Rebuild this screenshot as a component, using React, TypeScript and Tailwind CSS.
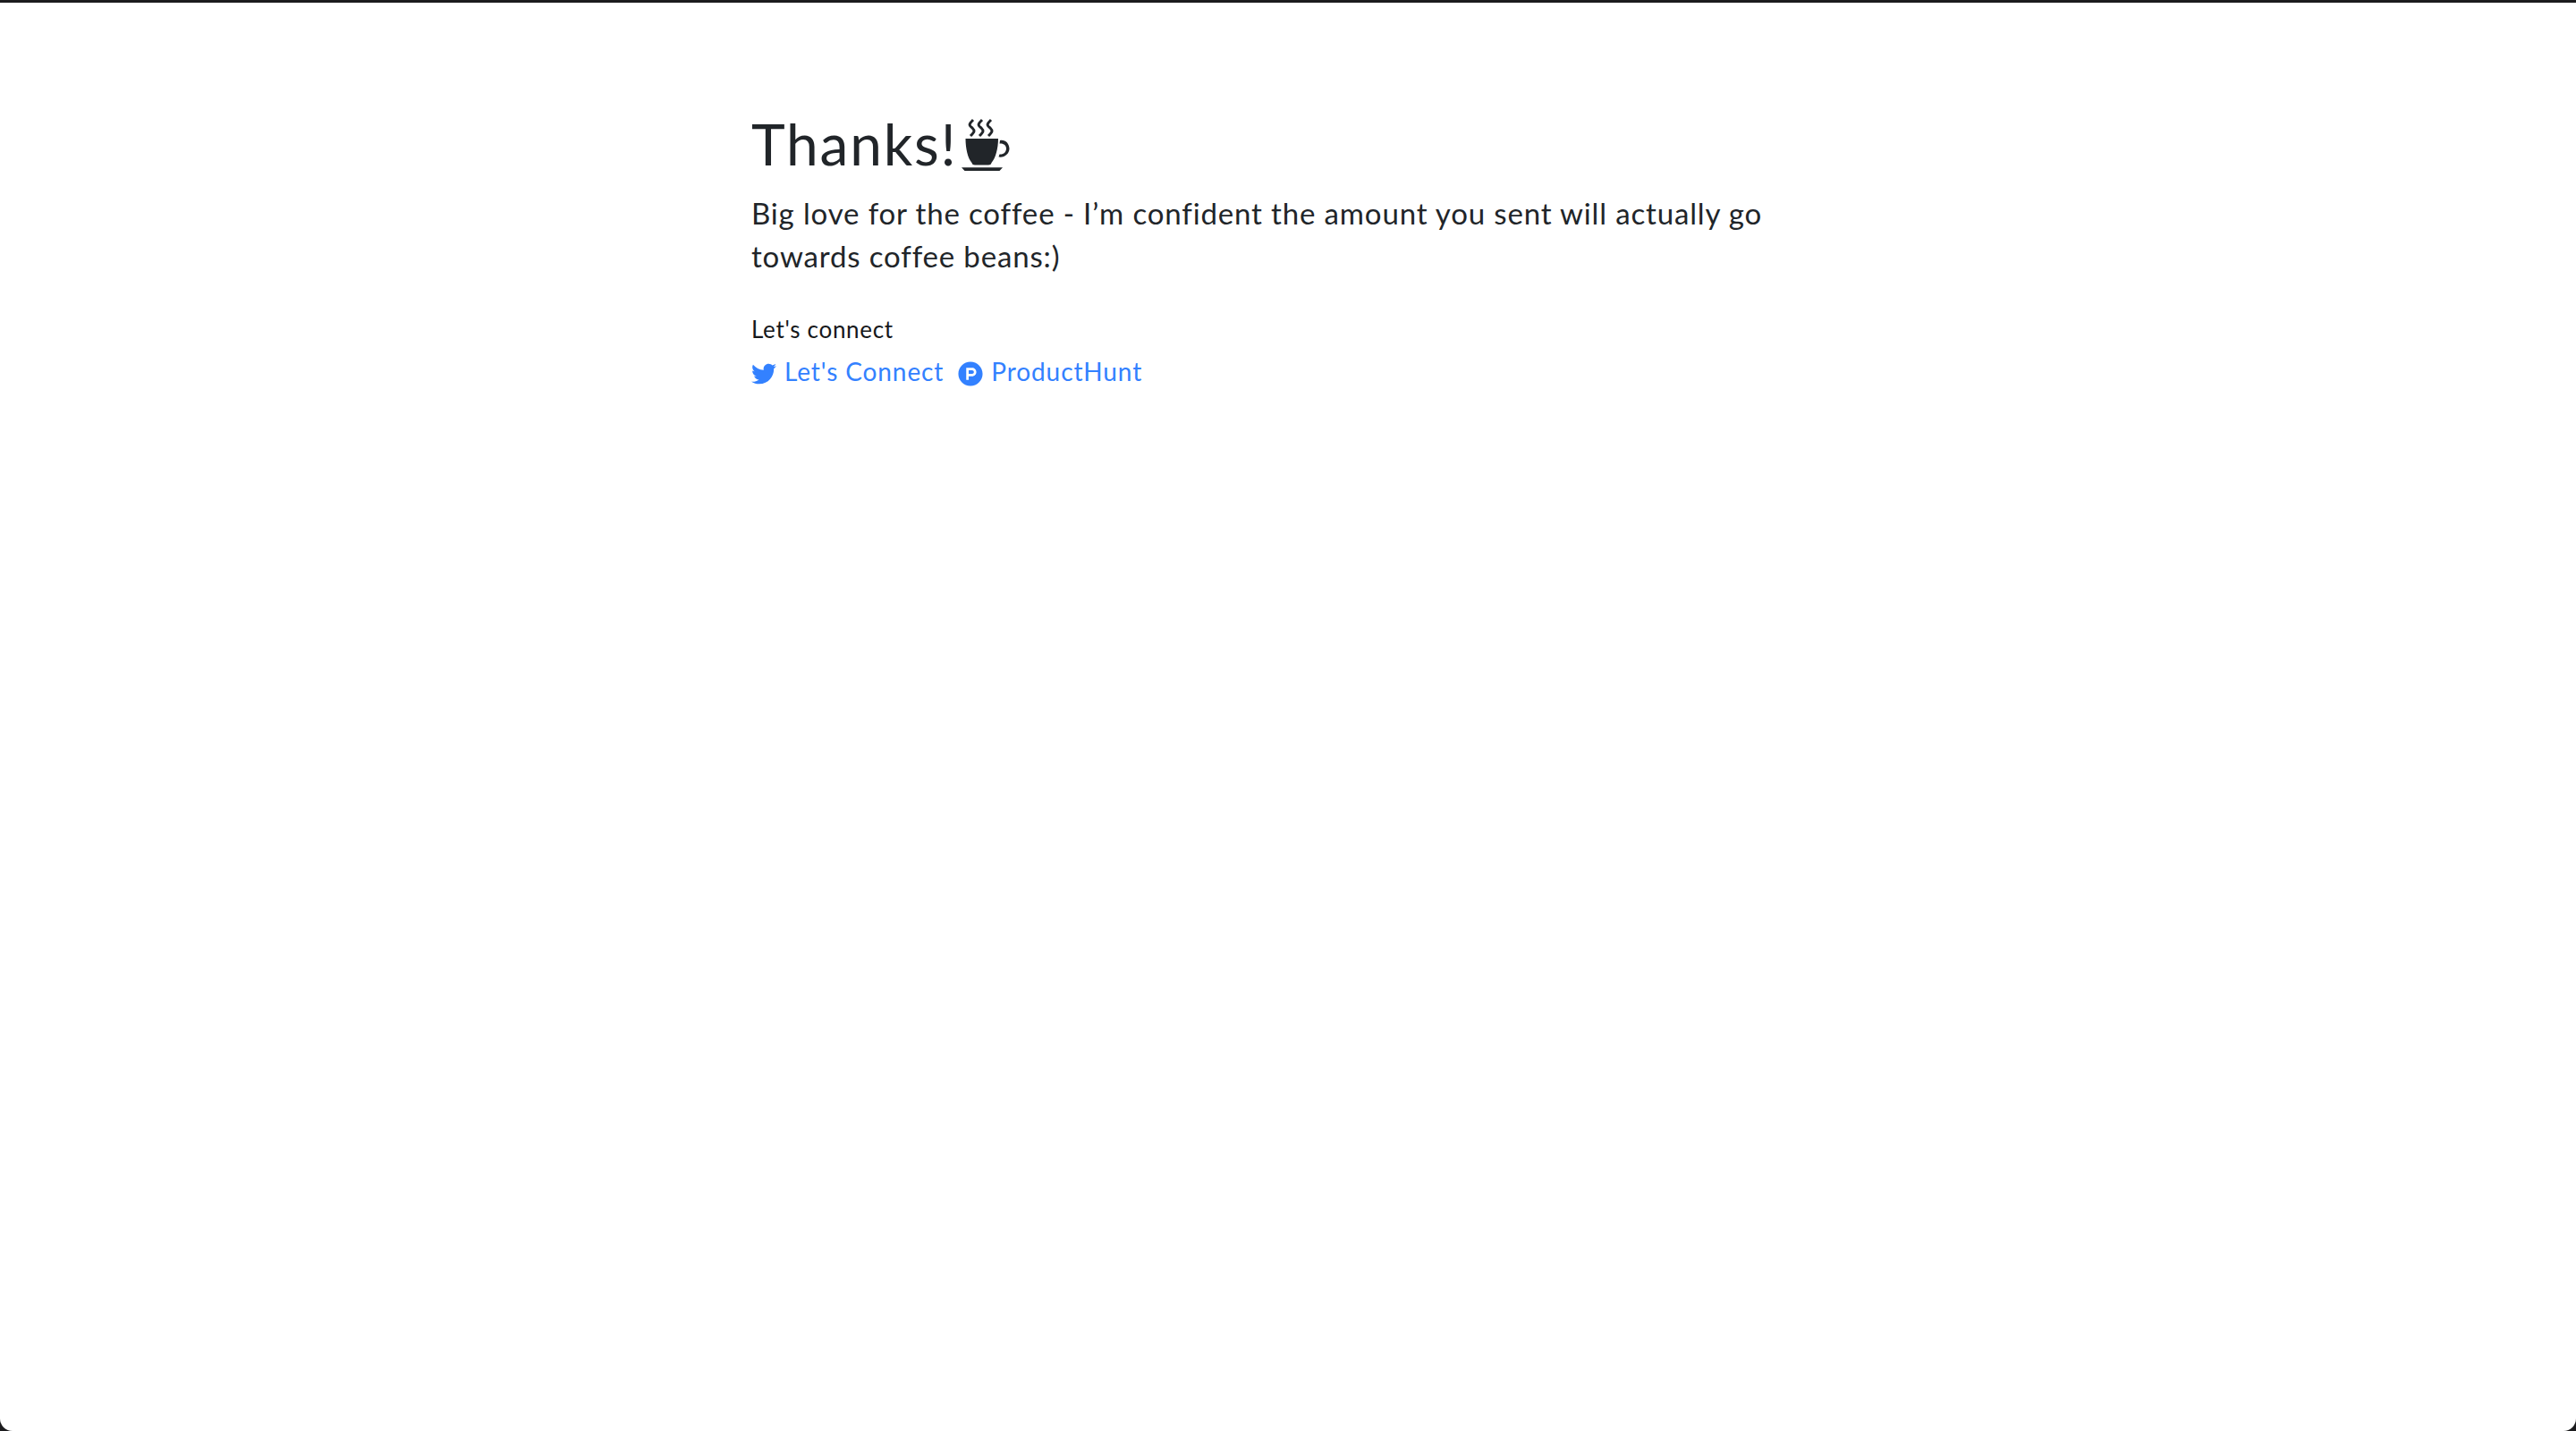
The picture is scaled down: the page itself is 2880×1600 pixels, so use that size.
import React from "react";
import { FaTwitter, FaProductHunt } from "react-icons/fa";

const CoffeeIcon = () => (
  <svg viewBox="0 0 55 60" className="w-[55px] h-[60px] text-[#212529] shrink-0" fill="currentColor">
    <path d="M4.5 23 H41 C41 34 38 45 33.5 50 Q33 52.5 30 52.5 H15 Q12 52.5 11.5 50 C7 45 4.5 34 4.5 23 Z" />
    <path d="M43 25 C49 24 53 28 53.5 34 C53.5 40 48 44.5 41.5 43.5 L42.5 40.5 C47 41 50 38 50 34 C50 30.5 47 28 42.5 28.5 Z" />
    <path d="M0 55.3 H46 L42.5 59 H3.5 Z" />
    <g fill="none" stroke="currentColor" strokeWidth="3">
      <path d="M13 2 C8 7 8 8 12 11 C15 14 15 15 10 20" />
      <path d="M23 2 C18 7 18 8 22 11 C25 14 25 15 20 20" />
      <path d="M33 2 C28 7 28 8 32 11 C35 14 35 15 30 20" />
    </g>
  </svg>
);

export default function App() {
  return (
    <div className="min-h-screen flex flex-col bg-[#1c1c1e] pt-[3px] font-['Lato',sans-serif]">
      <main className="flex-1 bg-white rounded-b-[14px]">
        <div className="mx-auto w-[1200px] pt-[123px] text-[#212529]">
          <div className="flex items-center h-[70px]">
            <h1 className="text-[64px] leading-[70px] tracking-[1.8px]">Thanks!</h1>
            <span className="ml-[4px] mt-[2px]">
              <CoffeeIcon />
            </span>
          </div>
          <p className="mt-[18px] text-[33px] leading-[48px] tracking-[0.85px]">
            Big love for the coffee - I’m confident the amount you sent will actually go towards coffee beans:)
          </p>
          <p className="mt-[39px] text-[26px] leading-[38px] tracking-[0.7px] text-[#16181b]">Let's connect</p>
          <div className="mt-[7px] flex items-center text-[28px] leading-[42px] tracking-[0.9px] text-[#3381ff]">
            <a className="flex items-center gap-[9px]" href="#">
              <FaTwitter className="w-[28px] h-[28px] mt-[5px]" />
              Let's Connect
            </a>
            <a className="flex items-center gap-[9px] ml-[16px]" href="#">
              <FaProductHunt className="w-[28px] h-[28px] mt-[5px]" />
              ProductHunt
            </a>
          </div>
        </div>
      </main>
    </div>
  );
}
